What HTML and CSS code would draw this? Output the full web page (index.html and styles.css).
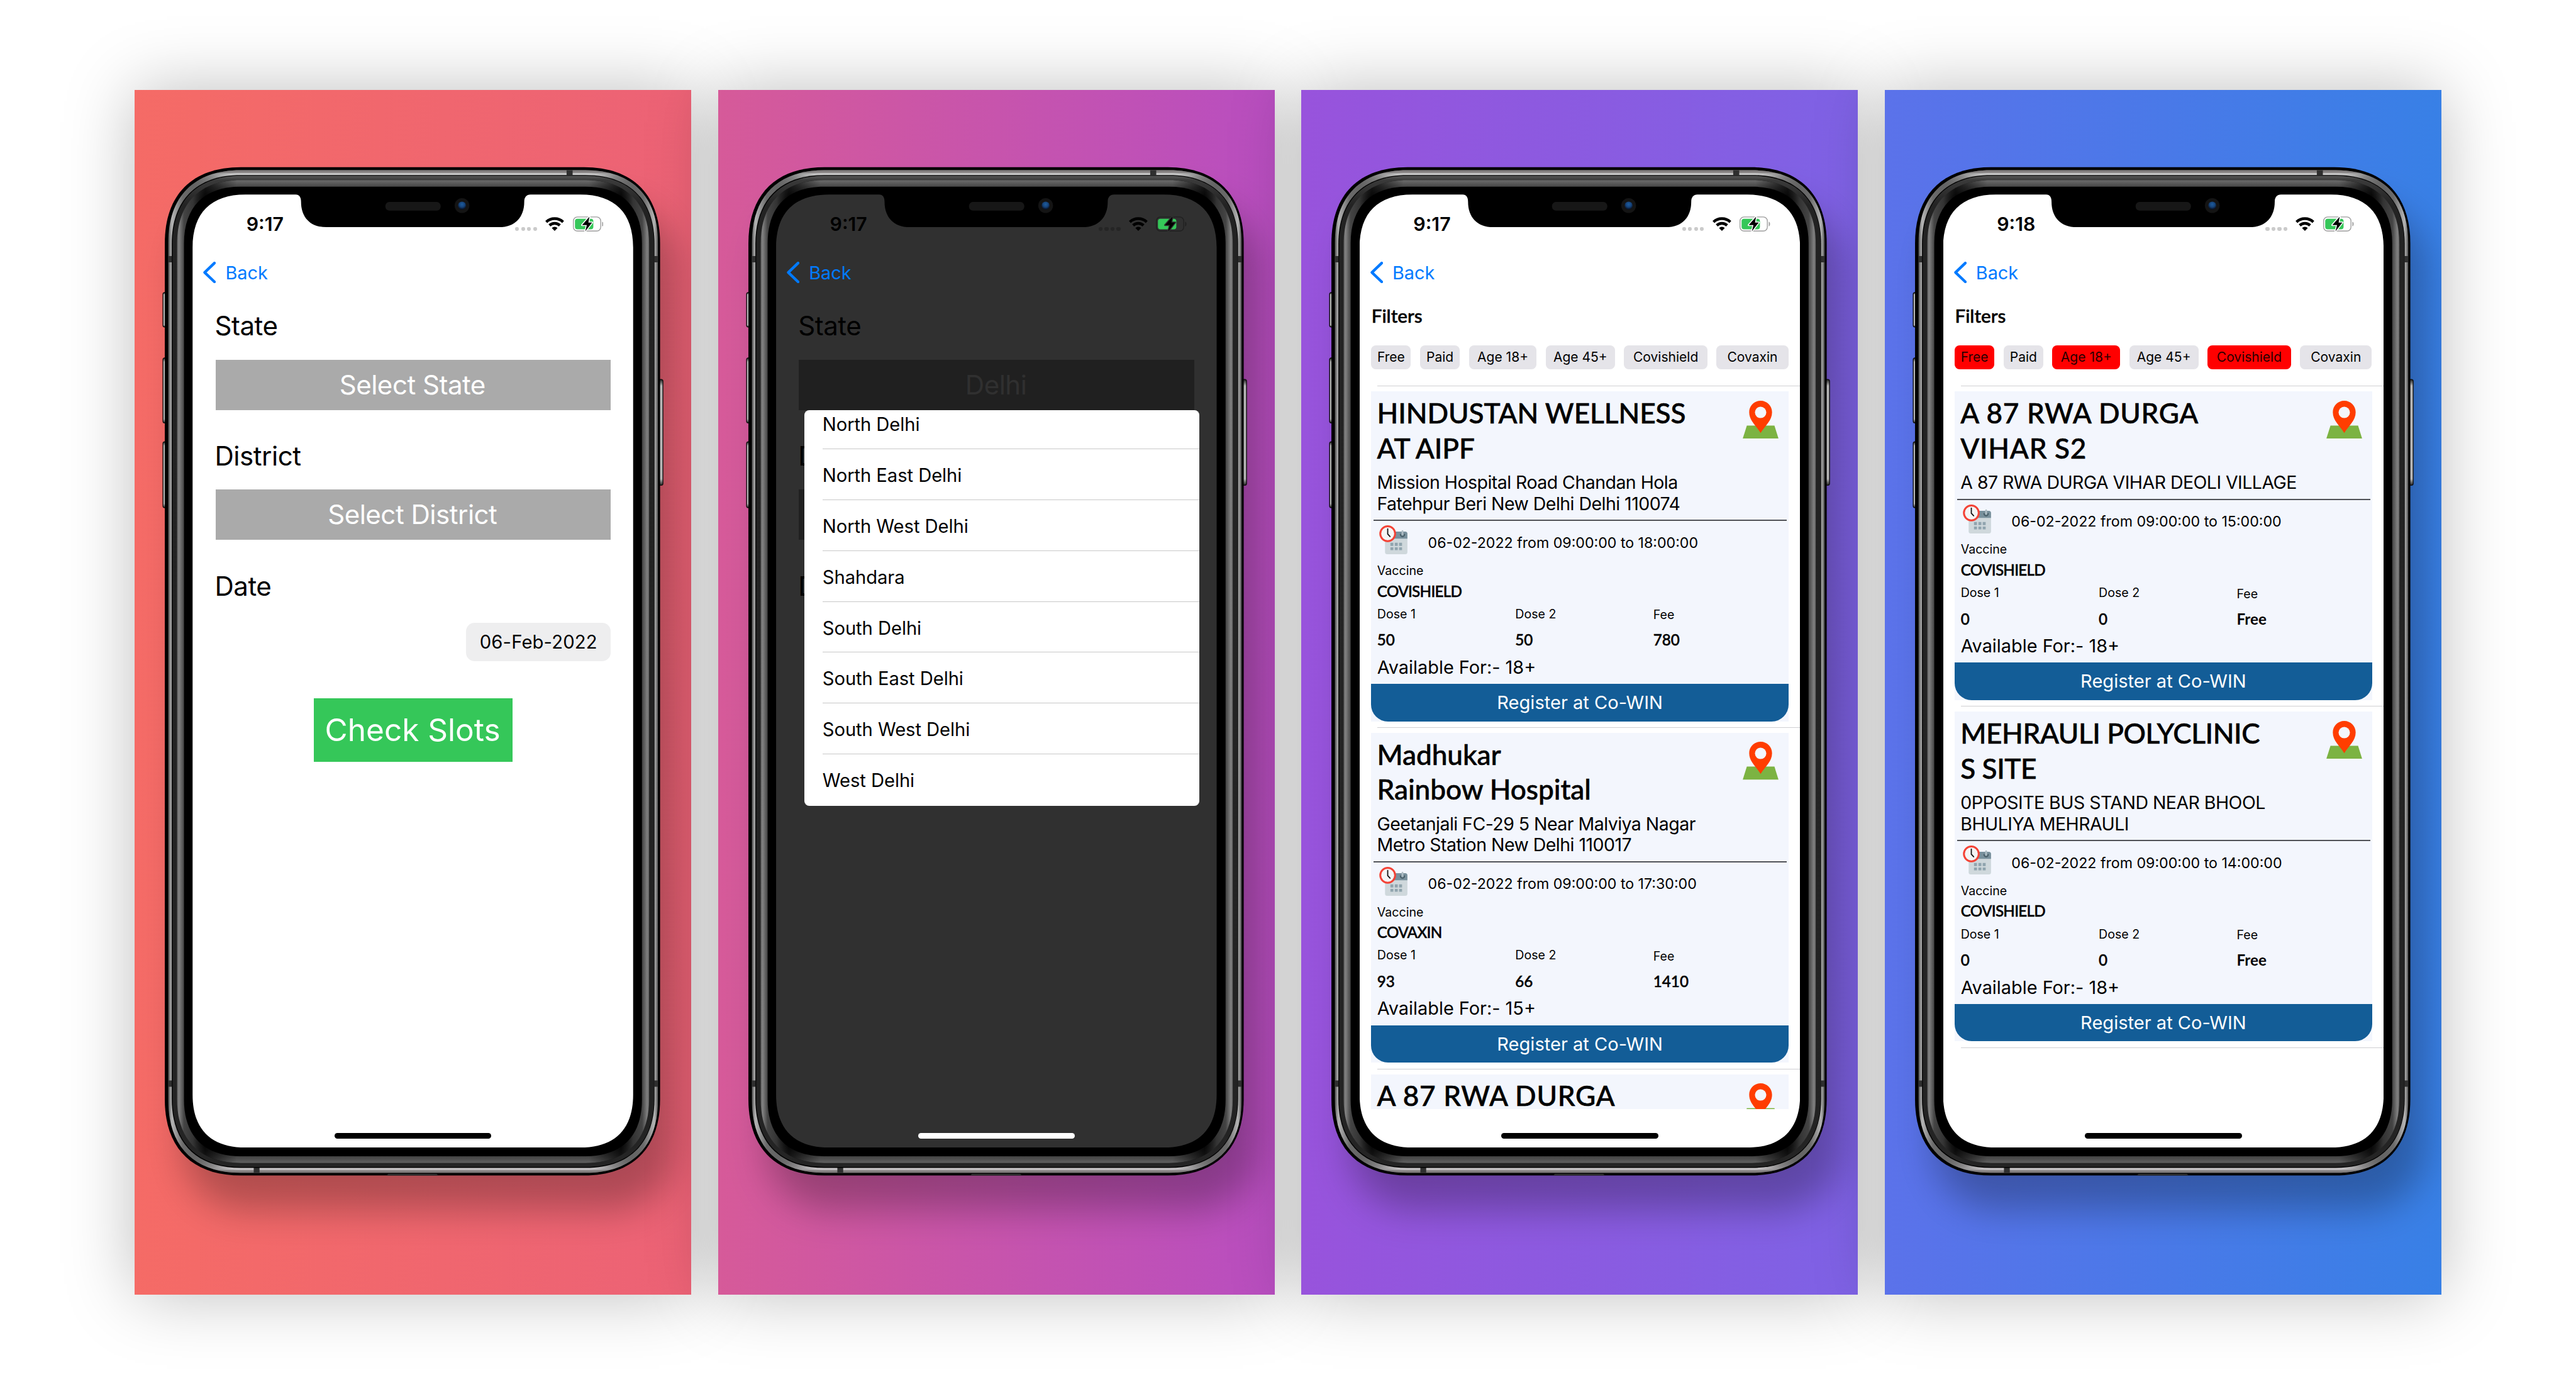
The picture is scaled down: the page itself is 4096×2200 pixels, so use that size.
FILE: index.html
```html
<!DOCTYPE html>
<html lang="en">
<head>
<meta charset="utf-8">
<title>Vaccine slot finder</title>
<link rel="stylesheet" href="styles.css">
</head>
<body>
<svg class="defs" aria-hidden="true">
  <defs>
    <linearGradient id="rimSide" gradientUnits="userSpaceOnUse" x1="375" x2="1468" y1="0" y2="0">
      <stop offset="0" stop-color="#4c4c4c"/><stop offset=".004" stop-color="#8f8f8f"/><stop offset=".0075" stop-color="#b4b4b4"/>
      <stop offset=".03" stop-color="#6a6a6a"/><stop offset=".09" stop-color="#5a5a5a"/><stop offset=".16" stop-color="#8a8a8a"/>
      <stop offset=".84" stop-color="#8a8a8a"/><stop offset=".91" stop-color="#5a5a5a"/><stop offset=".97" stop-color="#6a6a6a"/>
      <stop offset=".9925" stop-color="#b4b4b4"/><stop offset=".996" stop-color="#8f8f8f"/><stop offset="1" stop-color="#4c4c4c"/>
    </linearGradient>
    <linearGradient id="rimEnds" gradientUnits="userSpaceOnUse" x1="0" x2="0" y1="379" y2="2616">
      <stop offset="0" stop-color="#767272"/><stop offset=".0025" stop-color="#8f8b8b"/><stop offset=".0028" stop-color="#b8b8b8"/><stop offset=".0047" stop-color="#d2d2d2"/>
      <stop offset=".02" stop-color="#777"/><stop offset=".98" stop-color="#777"/>
      <stop offset=".9953" stop-color="#d0cdcf"/><stop offset=".9972" stop-color="#b8b5b7"/><stop offset=".9975" stop-color="#8f8b8b"/><stop offset="1" stop-color="#767272"/>
    </linearGradient>
    <linearGradient id="lip" gradientUnits="userSpaceOnUse" x1="0" x2="0" y1="391" y2="2603">
      <stop offset="0" stop-color="#585858"/><stop offset=".0045" stop-color="#3a3a3a"/><stop offset=".03" stop-color="#232323"/><stop offset="1" stop-color="#242424"/>
    </linearGradient>
    <linearGradient id="bevelSide" gradientUnits="userSpaceOnUse" x1="394.7" x2="1448.2" y1="0" y2="0">
      <stop offset="0" stop-color="#636363"/><stop offset=".004" stop-color="#828282"/><stop offset=".0147" stop-color="#444"/><stop offset=".035" stop-color="#333"/><stop offset=".06" stop-color="#000"/>
      <stop offset=".94" stop-color="#000"/><stop offset=".965" stop-color="#333"/><stop offset=".9853" stop-color="#444"/><stop offset=".996" stop-color="#828282"/><stop offset="1" stop-color="#636363"/>
    </linearGradient>
    <linearGradient id="bevelEnds" gradientUnits="userSpaceOnUse" x1="0" x2="0" y1="401" y2="2594">
      <stop offset="0" stop-color="#6c6c6c"/><stop offset=".0067" stop-color="#474747"/><stop offset=".016" stop-color="#1c1c1c"/><stop offset=".022" stop-color="#000"/>
      <stop offset=".978" stop-color="#000"/><stop offset=".984" stop-color="#1c1c1c"/><stop offset=".9932" stop-color="#434343"/><stop offset="1" stop-color="#606060"/>
    </linearGradient>
    <linearGradient id="fade" gradientUnits="userSpaceOnUse" x1="430" x2="1412" y1="0" y2="0">
      <stop offset="0" stop-color="#000"/><stop offset=".1" stop-color="#fff"/><stop offset=".9" stop-color="#fff"/><stop offset="1" stop-color="#000"/>
    </linearGradient>
    <mask id="endsMask" maskUnits="userSpaceOnUse" x="300" y="200" width="1242" height="2688">
      <path fill="url(#fade)" d="M430 200H1412V540H430zM430 2450H1412V2888H430z"/>
    </mask>
    <linearGradient id="key" x1="0" x2="0" y1="0" y2="1">
      <stop offset="0" stop-color="#222"/><stop offset=".06" stop-color="#b9b9b9"/><stop offset=".94" stop-color="#b9b9b9"/><stop offset="1" stop-color="#222"/>
    </linearGradient>
    <radialGradient id="lens" cx=".5" cy=".35" r=".6">
      <stop offset="0" stop-color="#1d5c9e"/><stop offset=".55" stop-color="#16447c"/><stop offset="1" stop-color="#081328"/>
    </radialGradient>
    <filter id="soft" filterUnits="userSpaceOnUse" x="100" y="200" width="1700" height="2800"><feGaussianBlur stdDeviation="42"/></filter>
    <clipPath id="display" clipPathUnits="objectBoundingBox">
      <path transform="scale(.001017294 .000470367)" d="M118 0H230C238 0 242 6 242 16C242 50 262 72.7 298 72.7H684C720 72.7 740 50 740 16C740 6 745 0 754 0H865c77 0 118 41 118 118V2008c0 77 -41 118 -118 118H118c-77 0 -118 -41 -118 -118V118c0 -77 41 -118 118 -118z"/>
    </clipPath>
  </defs>

  <symbol id="device" viewBox="300 200 1242 2688">
    <rect x="407" y="458" width="1100" height="2240" rx="140" fill="#000" fill-opacity=".27" filter="url(#soft)"/>
    <g stroke="#111" stroke-width="2" fill="url(#key)">
      <rect x="363.3" y="652" width="12" height="77" rx="4"/>
      <rect x="363.3" y="798" width="12" height="145" rx="4"/>
      <rect x="363.3" y="985" width="12" height="147" rx="4"/>
      <rect x="1466" y="846" width="13" height="236" rx="4"/>
    </g>
    <path d="M537.3 372.3H1302.7c109 0 170 61 170 170V2452c0 109 -61 170 -170 170H537.3c-109 0 -170 -61 -170 -170V542.3c0 -109 61 -170 170 -170z"/>
    <path fill="url(#rimSide)" d="M537 379H1306c104 0 162 58 162 162V2454c0 104 -58 162 -162 162H537c-104 0 -162 -58 -162 -162V541c0 -104 58 -162 162 -162z"/>
    <path fill="url(#rimEnds)" mask="url(#endsMask)" d="M537 379H1306c104 0 162 58 162 162V2454c0 104 -58 162 -162 162H537c-104 0 -162 -58 -162 -162V541c0 -104 58 -162 162 -162z"/>
    <path fill="#2f2f2f" d="M375 570.7h8v14h-8zM1460 570.7h8v14h-8zM375 2410h8v14h-8zM1460 2410h8v14h-8zM1264 379h13.5v11h-13.5zM565.8 2604h13v12h-13zM866 2618.5H974l4 3.5H862z"/>
    <path d="M536.8 389.7H1306.2c98.5 0 154 55.5 154 154V2451c0 98.5 -55.5 154 -154 154H536.8c-98.5 0 -154 -55.5 -154 -154V543.7c0 -98.5 55.5 -154 154 -154z"/>
    <path fill="url(#lip)" d="M536.7 391.7H1307c97 0 152 55 152 152V2451c0 97 -55 152 -152 152H536.7c-97 0 -152 -55 -152 -152V543.7c0 -97 55 -152 152 -152z"/>
    <path fill="url(#bevelSide)" d="M536.7 401H1306.2c91 0 142 51 142 142V2452c0 91 -51 142 -142 142H536.7c-91 0 -142 -51 -142 -142V543c0 -91 51 -142 142 -142z"/>
    <path fill="url(#bevelEnds)" mask="url(#endsMask)" d="M536.7 401H1306.2c91 0 142 51 142 142V2452c0 91 -51 142 -142 142H536.7c-91 0 -142 -51 -142 -142V543c0 -91 51 -142 142 -142z"/>
    <path d="M536.2 415.7H1306.2c81 0 126 45 126 126V2453c0 81 -45 126 -126 126H536.2c-81 0 -126 -45 -126 -126V541.7c0 -81 45 -126 126 -126z"/>
    <rect x="859.6" y="450" width="123.4" height="19" rx="8.5" fill="#171717"/>
    <circle cx="1030.6" cy="458" r="16.5" fill="#141414"/>
    <circle cx="1030.6" cy="458" r="9" fill="url(#lens)"/>
  </symbol>

  <symbol id="wifi" viewBox="0 0 42 31">
    <g fill="none" stroke="currentColor" stroke-width="6.3">
      <path d="M2.2 11A27.7 27.7 0 0 1 39.8 11"/>
      <path d="M9.4 18.6A17.2 17.2 0 0 1 32.6 18.6"/>
    </g>
    <path fill="currentColor" d="M21 31L14.6 24.4A9.3 9.3 0 0 1 27.4 24.4z"/>
  </symbol>

  <symbol id="battery" viewBox="0 0 68.5 34">
    <rect x="1" y="1.2" width="61" height="31.5" rx="9" fill="none" stroke="var(--outline)" stroke-width="1.9"/>
    <path fill="var(--outline)" d="M65.2 11.5c4 2 4 9 0 11z"/>
    <rect x="4.5" y="5.2" width="41" height="23.6" rx="5.5" fill="#35c759"/>
    <path d="M36.9 .6L20.4 19.4H31L27.4 33.4L42.8 13.6H34.4z" fill="currentColor" stroke="var(--paper)" stroke-width="4.2" stroke-linejoin="round" paint-order="stroke"/>
  </symbol>

  <symbol id="pin" viewBox="0 0 80 85">
    <path fill="#7cb342" d="M9.3 55.3H70.8L80 84.8H0z"/>
    <path fill="#ff3d00" d="M40 0C54 0 65.5 11.5 65.5 25.5C65.5 44 51 54 40 72C29 54 14.5 44 14.5 25.5C14.5 11.5 26 0 40 0z"/>
    <circle cx="40" cy="26" r="12.7" fill="#f3f6fd"/>
  </symbol>

  <symbol id="calendar" viewBox="0 0 64 65">
    <path fill="#cfd8dc" d="M13 29H63V59.5a5 5 0 0 1 -5 5H18a5 5 0 0 1 -5 -5z"/>
    <path fill="#78909c" d="M13 19a5 5 0 0 1 5 -5H58a5 5 0 0 1 5 5V29.8H13z"/>
    <path fill="none" stroke="#455a64" stroke-width="2.4" d="M47.4 19v1.6a4.6 4.6 0 0 0 9.2 0v-1.6"/>
    <path fill="none" stroke="#b0bec5" stroke-width="4" stroke-linecap="round" d="M52 13v7.5"/>
    <path fill="#90a4ae" d="M25 39h6.6v7h-6.6zM34.8 39h6.6v7h-6.6zM44.4 39h6.6v7h-6.6zM25 49h6.6v6.6h-6.6zM34.8 49h6.6v6.6h-6.6zM44.4 49h6.6v6.6h-6.6z"/>
    <circle cx="19" cy="18.7" r="16.6" fill="#f5f5f5" stroke="#f44336" stroke-width="4.2"/>
    <path fill="none" stroke="#111" stroke-width="2.5" stroke-linecap="round" d="M19 8V19.5L24.2 25.2"/>
  </symbol>

  <symbol id="chevron" viewBox="0 0 28.5 48">
    <path fill="none" stroke="#007aff" stroke-width="6" stroke-linecap="round" stroke-linejoin="round" d="M25.3 3L3.4 24L25.3 45"/>
  </symbol>
</svg>

<main class="gallery">
  <section class="panel panel-coral">
    <svg class="device"><use href="#device"/></svg>
    <div class="screen">
      <header class="status"><span class="clock">9:17</span><span class="dots"><i></i><i></i><i></i><i></i></span><svg class="wifi"><use href="#wifi"/></svg><svg class="battery"><use href="#battery"/></svg></header>
      <nav class="nav"><svg class="chevron"><use href="#chevron"/></svg><span>Back</span></nav>
      <div class="form">
        <div class="label">State</div>
        <div class="select">Select State</div>
        <div class="label">District</div>
        <div class="select">Select District</div>
        <div class="label">Date</div>
        <div class="date">06-Feb-2022</div>
        <div class="check">Check Slots</div>
      </div>
      <div class="home"></div>
    </div>
  </section>

  <section class="panel panel-pink">
    <svg class="device"><use href="#device"/></svg>
    <div class="screen dimmed">
      <header class="status"><span class="clock">9:17</span><span class="dots"><i></i><i></i><i></i><i></i></span><svg class="wifi"><use href="#wifi"/></svg><svg class="battery"><use href="#battery"/></svg></header>
      <nav class="nav"><svg class="chevron"><use href="#chevron"/></svg><span>Back</span></nav>
      <div class="form">
        <div class="label">State</div>
        <div class="select">Delhi</div>
        <div class="label">D</div>
        <div class="select"></div>
        <div class="label">D</div>
      </div>
      <ul class="menu">
        <li><span>North Delhi</span></li>
        <li><span>North East Delhi</span></li>
        <li><span>North West Delhi</span></li>
        <li><span>Shahdara</span></li>
        <li><span>South Delhi</span></li>
        <li><span>South East Delhi</span></li>
        <li><span>South West Delhi</span></li>
        <li><span>West Delhi</span></li>
      </ul>
      <div class="home"></div>
    </div>
  </section>

  <section class="panel panel-violet">
    <svg class="device"><use href="#device"/></svg>
    <div class="screen">
      <header class="status"><span class="clock">9:17</span><span class="dots"><i></i><i></i><i></i><i></i></span><svg class="wifi"><use href="#wifi"/></svg><svg class="battery"><use href="#battery"/></svg></header>
      <nav class="nav"><svg class="chevron"><use href="#chevron"/></svg><span>Back</span></nav>
      <h2 class="filters-title">Filters</h2>
      <div class="filters">
        <span class="chip">Free</span><span class="chip">Paid</span><span class="chip age18">Age 18+</span><span class="chip age45">Age 45+</span><span class="chip covishield">Covishield</span><span class="chip covaxin">Covaxin</span>
      </div>
      <div class="list">
        <div class="cell"><article class="card">
          <div class="head"><h3>HINDUSTAN WELLNESS<br>AT AIPF</h3><svg class="pin"><use href="#pin"/></svg></div>
          <p class="address">Mission Hospital Road Chandan Hola<br>Fatehpur Beri New Delhi Delhi 110074</p>
          <hr>
          <div class="time"><svg class="calendar"><use href="#calendar"/></svg><span>06-02-2022 from 09:00:00 to 18:00:00</span></div>
          <div class="caption">Vaccine</div>
          <div class="value">COVISHIELD</div>
          <div class="doses captions"><span>Dose 1</span><span>Dose 2</span><span class="fee">Fee</span></div>
          <div class="doses values"><span>50</span><span>50</span><span>780</span></div>
          <div class="available">Available For:- 18+</div>
          <div class="register">Register at Co-WIN</div>
        </article></div>
        <div class="cell"><article class="card">
          <div class="head"><h3>Madhukar<br>Rainbow Hospital</h3><svg class="pin"><use href="#pin"/></svg></div>
          <p class="address">Geetanjali FC-29 5 Near Malviya Nagar<br>Metro Station New Delhi 110017</p>
          <hr>
          <div class="time"><svg class="calendar"><use href="#calendar"/></svg><span>06-02-2022 from 09:00:00 to 17:30:00</span></div>
          <div class="caption">Vaccine</div>
          <div class="value">COVAXIN</div>
          <div class="doses captions"><span>Dose 1</span><span>Dose 2</span><span class="fee">Fee</span></div>
          <div class="doses values"><span>93</span><span>66</span><span>1410</span></div>
          <div class="available">Available For:- 15+</div>
          <div class="register">Register at Co-WIN</div>
        </article></div>
        <div class="cell"><article class="card">
          <div class="head"><h3 class="single spaced">A 87 RWA DURGA</h3><svg class="pin"><use href="#pin"/></svg></div>
        </article></div>
      </div>
      <div class="home"></div>
    </div>
  </section>

  <section class="panel panel-blue">
    <svg class="device"><use href="#device"/></svg>
    <div class="screen">
      <header class="status"><span class="clock">9:18</span><span class="dots"><i></i><i></i><i></i><i></i></span><svg class="wifi"><use href="#wifi"/></svg><svg class="battery"><use href="#battery"/></svg></header>
      <nav class="nav"><svg class="chevron"><use href="#chevron"/></svg><span>Back</span></nav>
      <h2 class="filters-title">Filters</h2>
      <div class="filters">
        <span class="chip on">Free</span><span class="chip">Paid</span><span class="chip age18 on">Age 18+</span><span class="chip age45">Age 45+</span><span class="chip covishield on">Covishield</span><span class="chip covaxin">Covaxin</span>
      </div>
      <div class="list">
        <div class="cell"><article class="card">
          <div class="head"><h3 class="spaced">A 87 RWA DURGA<br>VIHAR S2</h3><svg class="pin"><use href="#pin"/></svg></div>
          <p class="address">A 87 RWA DURGA VIHAR DEOLI VILLAGE</p>
          <hr>
          <div class="time"><svg class="calendar"><use href="#calendar"/></svg><span>06-02-2022 from 09:00:00 to 15:00:00</span></div>
          <div class="caption">Vaccine</div>
          <div class="value">COVISHIELD</div>
          <div class="doses captions"><span>Dose 1</span><span>Dose 2</span><span class="fee">Fee</span></div>
          <div class="doses values"><span>0</span><span>0</span><span class="free">Free</span></div>
          <div class="available">Available For:- 18+</div>
          <div class="register">Register at Co-WIN</div>
        </article></div>
        <div class="cell"><article class="card">
          <div class="head"><h3 class="tight">MEHRAULI POLYCLINIC<br>S SITE</h3><svg class="pin"><use href="#pin"/></svg></div>
          <p class="address">0PPOSITE BUS STAND NEAR BHOOL<br>BHULIYA MEHRAULI</p>
          <hr>
          <div class="time"><svg class="calendar"><use href="#calendar"/></svg><span>06-02-2022 from 09:00:00 to 14:00:00</span></div>
          <div class="caption">Vaccine</div>
          <div class="value">COVISHIELD</div>
          <div class="doses captions"><span>Dose 1</span><span>Dose 2</span><span class="fee">Fee</span></div>
          <div class="doses values"><span>0</span><span>0</span><span class="free">Free</span></div>
          <div class="available">Available For:- 18+</div>
          <div class="register">Register at Co-WIN</div>
        </article></div>
      </div>
      <div class="home"></div>
    </div>
  </section>
</main>
</body>
</html>
```
FILE: styles.css
```css
/* 1rem = 100 design pixels of the 5748 x 3088 artboard */
html { font-size: 71.26px; }
*, *::before, *::after { box-sizing: border-box; }
body { margin: 0; background: #fff; font-family: Inter, "Liberation Sans", sans-serif; font-size: .4rem; color: #000; overflow: hidden; }
h2, h3, p, ul { margin: 0; padding: 0; font-weight: inherit; }
svg { display: block; }
.defs { position: absolute; width: 0; height: 0; }

.gallery { display: flex; gap: .6rem; width: 57.48rem; height: 30.873rem; padding: 2rem 3rem; }
.panel { display: grid; flex: none; width: 12.42rem; height: 26.875rem; box-shadow: 0 0 1.45rem rgba(0, 0, 0, .26); }
.panel > * { grid-area: 1 / 1; }
.panel-coral { background: linear-gradient(90deg, #f56b66, #ec6276); }
.panel-pink { background: linear-gradient(90deg, #d65a99, #b84ec0); }
.panel-violet { background: linear-gradient(90deg, #9853dc, #7e62e5); }
.panel-blue { background: linear-gradient(90deg, #5b72ea, #3880e6); }
.device { width: 12.42rem; height: 26.875rem; }

.screen { --paper: #fff; --outline: #9c9c9c; --dot: #cbcbcb; position: relative; display: flex; flex-direction: column; width: 9.83rem; height: 21.26rem; margin: 2.34rem 0 0 1.298rem; background: var(--paper); clip-path: url(#display); white-space: nowrap; }
.dimmed { --paper: #303030; --outline: #202020; --dot: #252525; }

.status { display: flex; align-items: center; flex: none; height: 1.31rem; padding: 0 .665rem 0 1.2rem; }
.clock { margin-right: auto; font-size: .425rem; font-weight: 600; line-height: .6rem; }
.dots { display: flex; gap: .047rem; margin: .22rem .187rem 0 0; }
.dots i { width: .087rem; height: .09rem; border-radius: .035rem; background: var(--dot); }
.wifi { width: .42rem; height: .31rem; margin-right: .19rem; }
.battery { width: .685rem; height: .34rem; }

.nav { display: flex; align-items: center; flex: none; height: .86rem; padding-left: .237rem; gap: .21rem; color: #007aff; }
.nav span { font-size: .405rem; }
.chevron { width: .285rem; height: .48rem; }

.form { display: flex; flex-direction: column; padding: .415rem .5rem 0 .51rem; font-size: .59rem; letter-spacing: -.007rem; }
.label { height: .7rem; margin-left: -.015rem; line-height: .7rem; }
.select { height: 1.122rem; margin: .399rem 0 .679rem; padding-right: .03rem; line-height: 1.13rem; text-align: center; background: #aaa; color: #fff; }
.date { align-self: flex-end; width: 3.225rem; height: .85rem; margin-top: .475rem; padding-top: .015rem; border-radius: .19rem; background: #eeeeef; font-size: .41rem; line-height: .85rem; text-align: center; letter-spacing: .002rem; }
.check { align-self: center; width: 4.43rem; height: 1.42rem; margin-top: .825rem; padding-right: .02rem; background: #35c759; color: #fff; font-size: .695rem; line-height: 1.425rem; text-align: center; letter-spacing: 0; }
.dimmed .select { background: #202020; color: #303030; }

.menu { position: absolute; top: 4.81rem; left: .635rem; width: 8.81rem; height: 8.82rem; overflow: hidden; border-radius: .11rem; background: #fff; list-style: none; }
.menu li { height: 1.134rem; padding-left: .4rem; }
.menu li:first-child { margin-top: -.26rem; }
.menu span { display: block; height: 100%; border-bottom: .015rem solid #c8c8c8; font-size: .41rem; line-height: 1.19rem; letter-spacing: -.001rem; }
.menu li:last-child span { border: 0; }

.home { align-self: center; flex: none; width: 3.5rem; height: .125rem; margin: auto 0 .195rem; border-radius: .0625rem; background: #000; }
.dimmed .home { background: #fff; }

.filters-title { margin: .285rem 0 0 .265rem; font: 500 .415rem/.5rem Lato, "Liberation Sans", sans-serif; -webkit-text-stroke: .008rem; }
.filters { display: flex; gap: .204rem; margin: .415rem 0 0 .258rem; }
.chip { width: .887rem; height: .523rem; border-radius: .11rem; background: #e5e4e9; font-size: .295rem; line-height: .523rem; text-align: center; }
.chip.age18 { width: 1.512rem; }
.chip.age45 { width: 1.541rem; }
.chip.covishield { width: 1.862rem; }
.chip.covaxin { width: 1.6rem; }
.chip.on { background: #f00; color: #2a0000; }

.list { height: 16.135rem; margin-top: .375rem; overflow: hidden; }
.cell { position: relative; padding: .127rem .257rem .133rem .258rem; background: linear-gradient(#cfcfd2, #cfcfd2) .4rem 0 / 100% .015rem no-repeat; }
.panel-blue .cell:last-child { border-bottom: .015rem solid; border-image: linear-gradient(90deg, transparent .4rem, #cfcfd2 .4rem) 1; }
.card { overflow: hidden; background: #f3f6fd; }
.head { display: flex; justify-content: space-between; padding-left: .13rem; }
.card h3 { padding-top: .078rem; font: 500 .62rem/.784rem Lato, "Liberation Sans", sans-serif; letter-spacing: -.001rem; -webkit-text-stroke: .008rem; }
.card h3.spaced { letter-spacing: .01rem; }
.card h3.tight { letter-spacing: -.006rem; }
.card h3.single { padding-top: .156rem; line-height: .62rem; }
.pin { width: .8rem; height: .85rem; margin: .2rem .225rem 0 0; }
.address { margin: .143rem 0 0 .13rem; font-size: .4rem; line-height: .472rem; letter-spacing: -.0075rem; }
.card hr { height: .028rem; margin: .129rem .045rem 0 .05rem; border: 0; background: #505257; }
.time { display: flex; align-items: center; gap: .445rem; height: .65rem; margin: .096rem 0 0 .183rem; font-size: .325rem; }
.time span { padding-top: .12rem; }
.calendar { width: .64rem; height: .65rem; }
.caption { margin: .19rem 0 0 .135rem; font-size: .275rem; line-height: .34rem; }
.value, .values { font: 500 .34rem/.4rem Lato, "Liberation Sans", sans-serif; -webkit-text-stroke: .007rem; }
.value { margin: .088rem 0 0 .135rem; letter-spacing: -.01rem; }
.doses { display: grid; grid-template-columns: 3.08rem 3.08rem 1fr; margin-left: .135rem; }
.captions { margin-top: .138rem; font-size: .275rem; line-height: .34rem; }
.values { margin-top: .212rem; }
.fee { padding-top: .02rem; margin-bottom: -.02rem; }
.free { font-weight: 700; -webkit-text-stroke: 0; }
.available { margin: .168rem 0 0 .135rem; font-size: .405rem; line-height: .48rem; }
.register { height: .836rem; margin-top: .128rem; border-radius: 0 0 .38rem .38rem; background: #135d97; color: #fff; font-size: .408rem; line-height: .84rem; text-align: center; }
```
